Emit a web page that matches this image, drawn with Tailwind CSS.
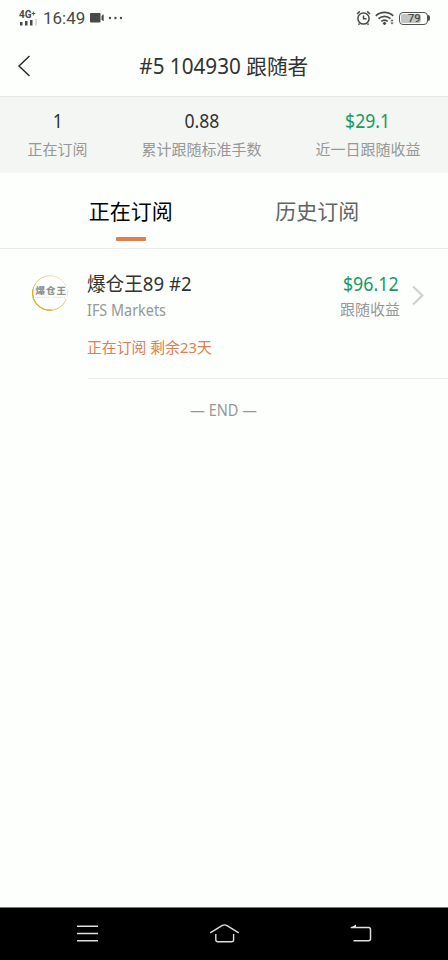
<!DOCTYPE html>
<html lang="zh-CN">
<head>
<meta charset="utf-8">
<meta name="viewport" content="width=device-width">
<title>跟随者</title>
<script src="https://cdn.jsdelivr.net/npm/@tailwindcss/browser@4"></script>
</head>
<body class="bg-[#fdfffd] font-['Noto_Sans','Noto_Sans_CJK_SC',sans-serif] font-normal text-[#303332]">
<div class="flex h-[960px] w-[448px] flex-col overflow-hidden whitespace-nowrap">
  <header class="flex h-9 shrink-0 items-center justify-between pr-[18px] pl-[19px] text-[#484a49]">
    <div class="flex h-full items-center">
      <div class="flex w-[18px] flex-col">
        <span class="h-[9px] font-['Roboto',sans-serif] text-[10px] leading-[9px] font-bold">4G<span class="relative -top-[2px] text-[7px]">+</span></span>
        <svg class="h-[7px] w-[18px]" viewBox="0 0 18 7" fill="currentColor"><path d="M1 3h2.500v3.500H1zM6 2h2.500v4.500H6zM11 1h2.500v5.500H11z"/><path opacity=".2" d="M16 0h2v6.500h-2z"/></svg>
      </div>
      <span class="ml-[6px] w-[43px] font-['Roboto',sans-serif] text-[17px] leading-5">16:49</span>
      <svg class="ml-[4px] h-3 w-[34px]" viewBox="0 0 34 12" fill="currentColor"><rect y="1" width="10.500" height="9.500" rx="1"/><path d="M11.500 4l1.500-1.500h.7V9H13l-1.500-1.500z"/><circle cx="20" cy="6" r="1.200"/><circle cx="25.500" cy="6" r="1.200"/><circle cx="31" cy="6" r="1.200"/></svg>
    </div>
    <div class="flex items-center">
      <svg class="h-4 w-[15px]" viewBox="0 0 15 16" fill="none" stroke="currentColor" stroke-width="1.500"><circle cx="7.500" cy="8.500" r="5.600"/><path d="M7.500 5.500v3.300h3M1 4l2.800-2.600M14 4l-2.800-2.600M3.500 13.500l-1 1.200M11.500 13.500l1 1.200"/></svg>
      <svg class="ml-[4px] h-4 w-[19px]" viewBox="0 0 19 16" fill="none" stroke="currentColor" stroke-width="1.700"><path d="M.8 5.800c4.800-4.500 12.600-4.500 17.400 0M3.500 8.700c3.500-3.200 8.500-3.200 12 0M6.300 11.400c2-1.700 4.400-1.700 6.400 0"/><path d="M9.500 11.500l2 2-2 1.800-2-1.800zM17 9.300l1.500 2h-3zM17 14.500l1.500-2h-3z" fill="currentColor" stroke="none"/></svg>
      <div class="ml-[5px] flex h-[13px] w-[29px] items-center rounded-[4px] border border-[#505251] p-[1px]"><div class="flex h-full w-[20px] items-center rounded-[2px] bg-[#c3c5c4] pl-[7px] font-['Roboto',sans-serif] text-[11px] leading-none font-medium">79</div></div>
      <div class="h-[6px] w-[2px] rounded-r bg-[#505251]"></div>
    </div>
  </header>

  <nav class="grid h-[60px] shrink-0 grid-cols-[48px_1fr_48px] items-center">
    <svg class="ml-[17px] h-6 w-4" viewBox="0 0 16 24" fill="none" stroke="#222" stroke-width="1.400"><path d="M12.500 2L2 12l10.500 10"/></svg>
    <h1 class="text-center text-[21px] leading-8"><span class="inline-block origin-center scale-x-[.985]">#5 104930 跟随者</span></h1>
  </nav>

  <section class="grid h-[77px] shrink-0 grid-cols-[115px_173px_160px] border-t border-[#e1e7e3] bg-[#f4f6f4] pt-[11px] text-center">
    <div><p class="text-[20px] leading-[26px]"><span class="inline-block scale-x-[.88]">1</span></p><p class="mt-[2px] text-[15px] leading-[26px] text-[#969897]">正在订阅</p></div>
    <div><p class="text-[20px] leading-[26px]"><span class="inline-block scale-x-[.88]">0.88</span></p><p class="mt-[2px] text-[15px] leading-[26px] text-[#969897]">累计跟随标准手数</p></div>
    <div><p class="text-[20px] leading-[26px] text-[#159a62]"><span class="inline-block scale-x-[.88]">$29.1</span></p><p class="mt-[2px] text-[15px] leading-[26px] text-[#969897]">近一日跟随收益</p></div>
  </section>

  <div class="grid h-[76px] shrink-0 grid-cols-2 border-b border-[#ebedeb] px-[37.500px] text-center text-[21px]">
    <div class="flex flex-col items-center text-black"><span class="mt-[22px] h-8 leading-8">正在订阅</span><i class="mt-[10px] h-1 w-[30px] rounded-[1px] bg-[#e37c50]"></i></div>
    <div class="flex flex-col items-center text-[#626463]"><span class="mt-[22px] h-8 leading-8">历史订阅</span></div>
  </div>

  <main class="flex grow flex-col">
    <article class="flex h-[130px] shrink-0 pl-8">
      <svg class="mt-[26px] h-9 w-9 shrink-0" viewBox="0 0 36 36">
        <defs><linearGradient id="ring" x1="0" y1="1" x2="1" y2="0"><stop stop-color="#d8aa20"/><stop offset=".45" stop-color="#dfc56a"/><stop offset="1" stop-color="#eeeadd"/></linearGradient></defs>
        <circle cx="18" cy="18" r="17.300" fill="#fff" stroke="url(#ring)" stroke-width="1"/>
        <path d="M1 14A17.300 17.300 0 0 0 20 35" fill="none" stroke="#dbad2b" stroke-width="1.200"/>
        <rect x="2" y="11" width="33" height="13" fill="#fdfffd"/>
        <text x="3.500" y="19" textLength="30.500" font-family="Noto Sans CJK SC" font-size="9.500" font-weight="900" fill="#929493">爆仓王</text>
        <path d="M3 22.300h14M21 22.300h12" stroke="#d3d5d4" stroke-width=".8" stroke-dasharray="1.500 .7"/>
      </svg>
      <div class="ml-[20px] flex grow border-b border-[#ebedeb]">
        <div class="grow pt-[22px]">
          <h2 class="text-[19px] leading-[26px]"><span class="inline-block origin-left -translate-x-px scale-x-[.98]">爆仓王89 #2</span></h2>
          <p class="mt-[1px] text-[16px] leading-[24px] text-[#969897]"><span class="inline-block origin-left -translate-x-px scale-x-[.9]">IFS Markets</span></p>
          <p class="mt-[13px] text-[15px] leading-[24px] text-[#e37c50]"><span class="inline-block origin-left -translate-x-px scale-x-[.99]">正在订阅 剩余23天</span></p>
        </div>
        <div class="pt-[22px] text-right">
          <p class="text-[20px] leading-[26px] text-[#159a62]"><span class="inline-block origin-right -translate-x-px scale-x-[.89]">$96.12</span></p>
          <p class="text-[15px] leading-[24px] text-[#969897]">跟随收益</p>
        </div>
        <svg class="mt-[35px] mr-[22px] ml-[12px] h-[22px] w-[14px]" viewBox="0 0 14 22" fill="none" stroke="#cfd1d0" stroke-width="2.200"><path d="M1 2.500l9.300 9-9.300 9"/></svg>
      </div>
    </article>
    <p class="pt-[19px] text-center text-[16px] leading-6 text-[#969897]"><span class="inline-block scale-x-[.91]">— END —</span></p>
  </main>

  <footer class="flex h-[53px] shrink-0 items-center border-t border-[#777] bg-black pl-[76px]">
    <svg class="h-[22px] w-[23px]" viewBox="0 0 23 22" stroke="#dedede" stroke-width="1.500"><path d="M1 3.300h21M1 10.500h21M1 17.700h21"/></svg>
    <svg class="ml-[110px] h-[22px] w-[31px]" viewBox="0 0 31 22" fill="none" stroke="#dedede" stroke-width="1.400"><path d="M1.200 9.800L13 2.600q2.500-1.500 5 0l11.800 7.200M6.800 11v5.700q0 2 2 2H22.600q2 0 2-2V11"/></svg>
    <svg class="ml-[109px] h-[22px] w-[24px]" viewBox="0 0 24 22" fill="none" stroke="#dedede" stroke-width="1.500"><path d="M2 4.500h17.500q2 0 2 2V15.700q0 2-2 2H4.500"/><path d="M1 5l6-3.500V5z" fill="#dedede" stroke="none"/></svg>
  </footer>
</div>
</body>
</html>
